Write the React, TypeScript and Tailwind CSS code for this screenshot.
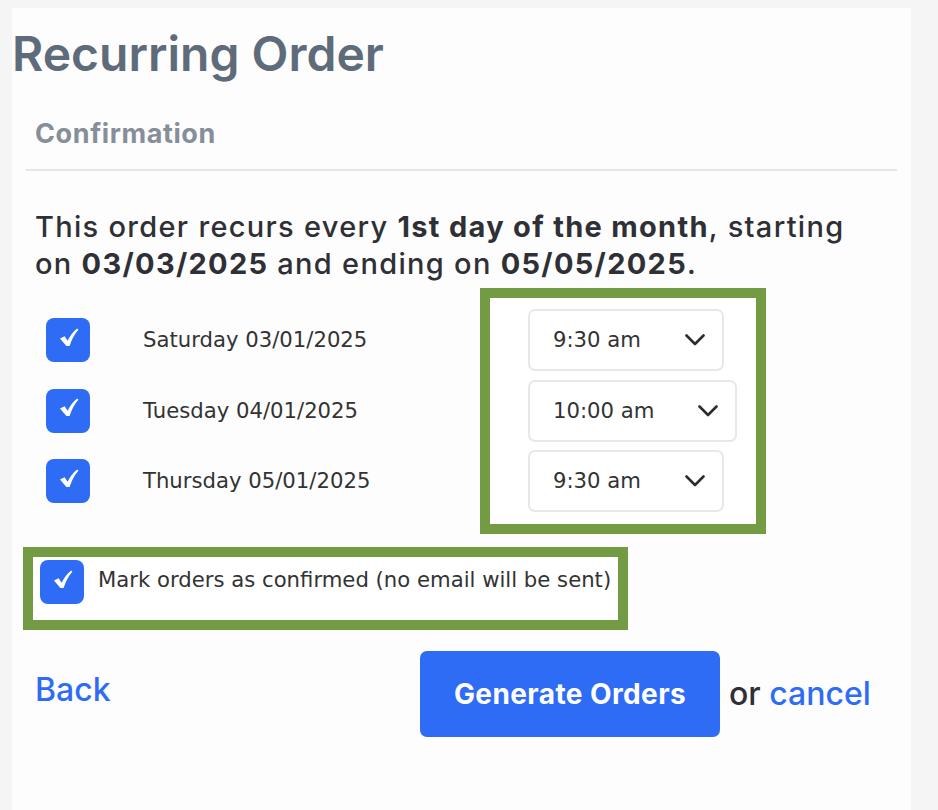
const rows = [
  { day: "Saturday 03/01/2025", time: "9:30 am" },
  { day: "Tuesday 04/01/2025", time: "10:00 am" },
  { day: "Thursday 05/01/2025", time: "9:30 am" },
];

function CheckBox() {
  return (
    <span className="flex h-[44px] w-[44px] shrink-0 items-center justify-center rounded-[8px] bg-[#2f6cf6]">
      <svg width="20" height="19" viewBox="0 0 20 19" className="-mt-[6px] ml-[1px]">
        <path d="M1 10.5 L5.6 8.2 L8.6 12.8 Q12.2 5 18.2 0.4 L19.4 1.8 Q13.8 8 10.6 18 L7.4 18 Z" fill="white" />
      </svg>
    </span>
  );
}

function Chevron() {
  return (
    <svg width="20" height="12" viewBox="0 0 20 12" className="ml-[44px] shrink-0">
      <polyline points="1.5,1.5 10,10 18.5,1.5" fill="none" stroke="#2a2c30" strokeWidth="2.6" strokeLinecap="round" strokeLinejoin="round" />
    </svg>
  );
}

export default function App() {
  return (
    <div className="min-h-[810px] bg-[#f5f5f5] pl-[12px] pr-[27px] pt-[8px]">
      <div className="min-h-[802px] bg-[#fdfdfd] pt-[22px]">
        {/* Titulo */}
        <h1 className="font-['Inter',sans-serif] text-[48px] font-semibold leading-none text-[#5e6b7a]">
          Recurring Order
        </h1>

        <div className="mx-[14px] mt-[42px] border-b-2 border-[#e6e6e6] pb-[22px] pl-[9px]">
          <h2 className="font-['Inter',sans-serif] text-[27px] font-bold leading-none tracking-[0.6px] text-[#858e99]">
            Confirmation
          </h2>
        </div>

        <div className="pl-[23px]">
          <p className="mt-[37px] w-[830px] font-['Inter',sans-serif] text-[29px] font-medium leading-[37px] tracking-[1.3px] text-[#2f3036]">
            This order recurs every <b className="font-bold">1st day of the month</b>, starting on{" "}
            <b className="font-bold">03/03/2025</b> and ending on <b className="font-bold">05/05/2025</b>.
          </p>

          {/* Fechas y horas */}
          <div className="mt-[6px] flex font-['DejaVu_Sans',sans-serif] text-[21.2px] text-[#333333]">
            <div className="flex w-[445px] flex-col gap-[8.5px] pt-[21px]">
              {rows.map((r) => (
                <div key={r.day} className="flex h-[62px] items-center gap-[53px] pl-[11px]">
                  <CheckBox />
                  <span>{r.day}</span>
                </div>
              ))}
            </div>
            <div className="flex flex-col items-start gap-[8.5px] border-[10px] border-[#739b44] bg-white pb-[12px] pl-[38px] pr-[19px] pt-[11px]">
              {rows.map((r) => (
                <div
                  key={r.day}
                  className="flex h-[62px] items-center rounded-[7px] border-2 border-[#e8e8e8] bg-white pl-[23px] pr-[17px]"
                >
                  <span>{r.time}</span>
                  <Chevron />
                </div>
              ))}
            </div>
          </div>
        </div>

        <div className="ml-[11px] mt-[13px] inline-flex items-center gap-[14px] border-[10px] border-[#739b44] bg-white pb-[16px] pl-[7px] pr-[7px] pt-[3px] font-['DejaVu_Sans',sans-serif] text-[21.2px] text-[#333333]">
          <CheckBox />
          <span className="-mt-[4px]">Mark orders as confirmed (no email will be sent)</span>
        </div>

        {/* Acciones */}
        <div className="mt-[21px] flex items-center pl-[23px] font-['Inter',sans-serif]">
          <a className="-mt-[8px] w-[385px] text-[32px] font-medium text-[#2f6cf6]">Back</a>
          <button className="h-[86px] w-[300px] rounded-[7px] bg-[#2f6cf6] text-[28px] font-bold tracking-[0.4px] text-white">
            Generate Orders
          </button>
          <span className="ml-[9px] text-[32px] font-medium text-[#2f3036]">
            or <a className="text-[#2f6cf6]">cancel</a>
          </span>
        </div>
      </div>
    </div>
  );
}
